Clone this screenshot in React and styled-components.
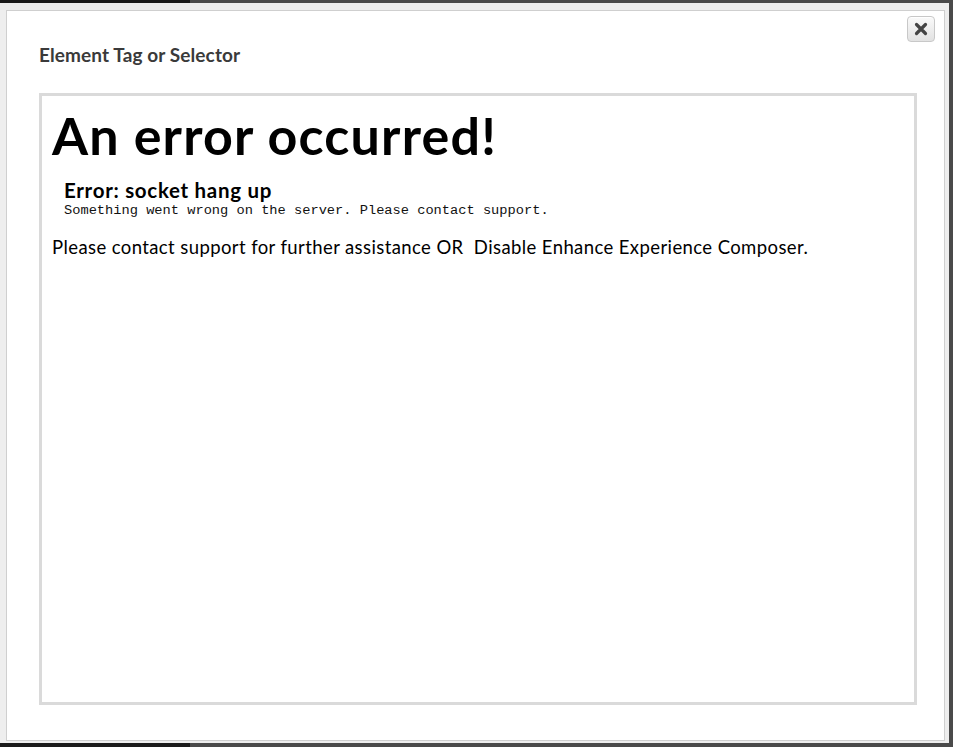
import styled, { createGlobalStyle } from 'styled-components'

const Global = createGlobalStyle`
	html, body {
		margin: 0;
		padding: 0;
		background: #444;
	}
	body {
		font-family: 'Lato', 'Open Sans', sans-serif;
	}
`

const Screen = styled.div`
	width: 953px;
	height: 747px;
	overflow: hidden;
	background: linear-gradient(to right, #1a1a1a 0 190px, #4a4a4a 190px);
	display: flex;
	flex-direction: column;
`

const Frame = styled.div`
	margin-top: 3px;
	width: 949px;
	height: 740px;
	box-sizing: border-box;
	background: #eeeeee;
	padding: 7px 4px 2px 6px;
	display: flex;
`

const Panel = styled.div`
	position: relative;
	flex: 1;
	background: #fff;
	border: 1px solid #cfcfcf;
	padding: 32px 27px 35px 32px;
	display: flex;
	flex-direction: column;
`

const CloseButton = styled.button`
	position: absolute;
	top: 5px;
	right: 9px;
	width: 28px;
	height: 26px;
	padding: 0;
	border: 1px solid #c8c8c8;
	border-radius: 4px;
	background: linear-gradient(#fafafa, #e2e2e2);
	box-shadow: inset 0 1px 0 #fff;
	display: flex;
	align-items: center;
	justify-content: center;
	cursor: pointer;
`

const Label = styled.div`
	font-family: 'Lato', 'Open Sans', sans-serif;
	font-weight: 700;
	font-size: 19px;
	color: #3a3a3a;
	letter-spacing: 0.1px;
	line-height: 24px;
	margin-bottom: 26px;
`

const Content = styled.div`
	flex: 1;
	border: 3px solid #dadada;
	padding: 11px 10px;
	color: #000;
`

const Heading = styled.h1`
	margin: 0;
	font-family: 'Lato', sans-serif;
	font-weight: 700;
	font-size: 52px;
	line-height: 56px;
	letter-spacing: 1.2px;
`

const ErrorBlock = styled.div`
	padding: 16px 12px 0;
`

const ErrorTitle = styled.div`
	font-family: 'Lato', sans-serif;
	font-weight: 700;
	font-size: 20.5px;
	line-height: 22px;
	letter-spacing: 0.7px;
`

const ErrorDetail = styled.pre`
	margin: 2px 0 0;
	font-family: 'Liberation Mono', monospace;
	font-size: 13.7px;
	line-height: 16px;
	color: #111;
`

const Message = styled.p`
	margin: 16px 0 0;
	font-family: 'Lato', sans-serif;
	font-size: 18.5px;
	line-height: 24px;
	letter-spacing: 0.4px;
	white-space: pre;
`

export default function App() {
	return (
		<>
			<Global />
			<Screen>
				<Frame>
					<Panel>
						<CloseButton aria-label='Close'>
							<svg width='14' height='14' viewBox='0 0 14 14'>
								<path
									d='M2.5 2.5 L11.5 11.5 M11.5 2.5 L2.5 11.5'
									stroke='#444'
									strokeWidth='3.2'
									strokeLinecap='round'
								/>
							</svg>
						</CloseButton>
						<Label>Element Tag or Selector</Label>
						<Content>
							<Heading>An error occurred!</Heading>
							<ErrorBlock>
								<ErrorTitle>Error: socket hang up</ErrorTitle>
								<ErrorDetail>Something went wrong on the server. Please contact support.</ErrorDetail>
							</ErrorBlock>
							<Message>{'Please contact support for further assistance OR  Disable Enhance Experience Composer.'}</Message>
						</Content>
					</Panel>
				</Frame>
			</Screen>
		</>
	)
}
